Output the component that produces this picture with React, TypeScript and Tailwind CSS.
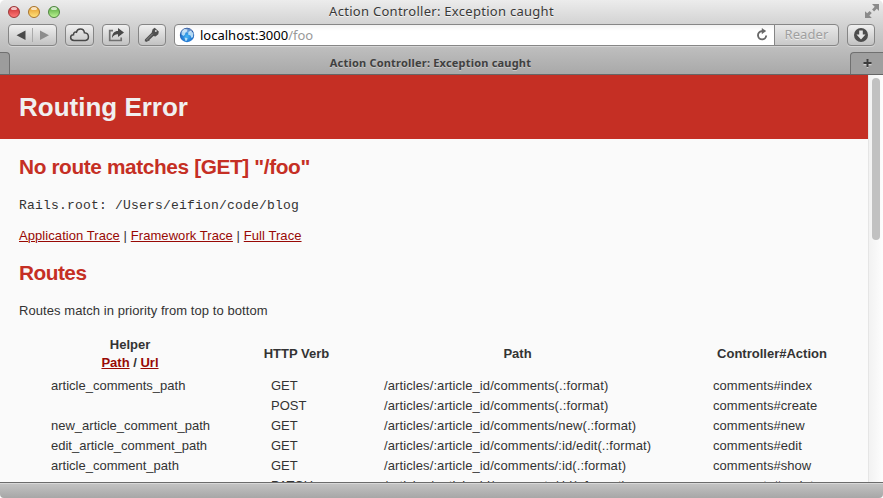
import React from "react";

const routes = [
  ["article_comments_path", "GET", "/articles/:article_id/comments(.:format)", "comments#index"],
  ["", "POST", "/articles/:article_id/comments(.:format)", "comments#create"],
  ["new_article_comment_path", "GET", "/articles/:article_id/comments/new(.:format)", "comments#new"],
  ["edit_article_comment_path", "GET", "/articles/:article_id/comments/:id/edit(.:format)", "comments#edit"],
  ["article_comment_path", "GET", "/articles/:article_id/comments/:id(.:format)", "comments#show"],
  ["", "PATCH", "/articles/:article_id/comments/:id(.:format)", "comments#update"],
];

const buttonLook =
  "flex h-[22px] items-center justify-center rounded-[4px] border border-[#858585] bg-linear-to-b from-[#f0f0f0] to-[#c2c2c2] shadow-[0_1px_0_#d5d5d5]";

function Light({ className }: { className: string }) {
  return (
    <span className={`relative h-3 w-3 overflow-hidden rounded-full border ${className}`}>
      <span className="absolute left-[2px] top-0 h-[3px] w-[6px] rounded-full bg-white/70" />
    </span>
  );
}

function TitleBar() {
  return (
    <div className="relative flex h-6 items-center pl-2">
      <div className="-mt-px flex gap-2">
        <Light className="border-[#9b3838] bg-linear-to-b from-[#c82a31] to-[#ff7777]" />
        <Light className="border-[#a8732c] bg-linear-to-b from-[#e49a25] to-[#ffe27a]" />
        <Light className="border-[#4f8540] bg-linear-to-b from-[#55a83c] to-[#b9f391]" />
      </div>
      <h1 className="absolute inset-x-0 top-[2px] text-center text-[13px] leading-[18px] tracking-[0.28px] text-[#383838] [text-shadow:0_1px_0_#f4f4f4]">
        Action Controller: Exception caught
      </h1>
      <svg className="absolute right-[4px] top-[4px]" width="14" height="14" viewBox="0 0 14 14" fill="#8a8a8a">
        <path d="M7 0h7v7l-2.2-2.2-2.7 2.6-2-2 2.6-2.7z" />
        <path d="M0 7.2l2.2 2.1 2.4-2.4 2.2 2.1-2.4 2.5L6.8 14H0z" />
      </svg>
    </div>
  );
}

function Toolbar() {
  return (
    <div className="flex h-[23px] items-start pl-2 pr-2">
      <div className={`${buttonLook} w-[49px]`}>
        <svg width="47" height="20" viewBox="0 0 47 20">
          <path d="M16.500 5.500v9.500L7.500 10.200z" fill="#484848" />
          <path d="M31 5.500v9.500l9-4.800z" fill="#8d8d8d" />
          <path d="M23.500 3v14" stroke="#aaa" />
        </svg>
      </div>
      <div className={`${buttonLook} ml-2 w-[29px]`}>
        <svg width="21" height="16" viewBox="0 0 21 16" fill="none" stroke="#484848" strokeWidth="1.500">
          <path d="M5 13.400C.6 13.300.6 8 4.500 7.700C4.500 5.500 6 4.700 7.500 5.200C8.200 1 14.800.8 15.400 5.700C20.700 6 20.500 13 16.400 13.400Z" />
        </svg>
      </div>
      <div className={`${buttonLook} ml-2 w-[28px]`}>
        <svg width="18" height="16" viewBox="0 0 18 16">
          <path d="M6 3.700H2.700v9.800h11.500V10.500" fill="none" stroke="#707070" strokeWidth="1.700" />
          <path d="M5 11C5 6.300 7.500 4 11 4V1l6 4.500-6 4.500V7.300C8.300 7.200 6.500 8.300 5 11z" fill="#484848" />
        </svg>
      </div>
      <div className={`${buttonLook} ml-2 w-[28px]`}>
        <svg width="16" height="16" viewBox="0 0 16 16">
          <path d="M8.600 2.300L10.700.8L14.800 4.600L14.300 7.300L11.500 9.400L9.500 8.900L5.500 12.700L5.300 14L3.600 13.800L3.200 15L.8 14.200L.9 12.500L7.600 5.700z" fill="#505050" />
          <circle cx="11.800" cy="3.900" r="1" fill="#d8d8d8" />
          <path d="M2.500 13L8.700 6.800" stroke="#999" strokeWidth=".8" />
        </svg>
      </div>
      <div className="ml-2 flex h-[22px] grow items-center rounded-l-[4px] border border-[#868686] bg-linear-to-b from-[#f3f3f3] to-white to-30% pl-1 shadow-[0_1px_0_#d5d5d5]">
        <svg width="16" height="16" viewBox="0 0 16 16">
          <defs>
            <radialGradient id="globe" cx=".5" cy=".6" r=".55">
              <stop offset="0" stopColor="#43b6f7" />
              <stop offset=".7" stopColor="#2377d0" />
              <stop offset="1" stopColor="#1b4a99" />
            </radialGradient>
          </defs>
          <circle cx="8" cy="8" r="7.200" fill="url(#globe)" />
          <path d="M2.500 4.500L5.500 2l3 .5-.5 2-1.500 1L6 7.500 4.500 9 2.500 7.500zM9.500 5l2.500-1.500 2.500 3-.5 3.500-1.500 1-1-2.500L9 7.500zM5.500 10.500l3 .5-.5 2.500-1.500.5z" fill="#cdeafa" opacity=".85" />
          <ellipse cx="8" cy="3.500" rx="4.800" ry="2.300" fill="#fff" opacity=".3" />
        </svg>
        <span className="ml-[5px] text-[13px] leading-[18px] text-black">
          localhost:3000<span className="text-[#999]">/foo</span>
        </span>
        <svg className="ml-auto mr-[5px]" width="14" height="14" viewBox="0 0 14 14">
          <path d="M8 3.200H6.700A4.100 4.100 0 1 0 11.200 7.500" fill="none" stroke="#686868" strokeWidth="1.900" />
          <path d="M6.800 0v6.200L11.200 3z" fill="#686868" />
        </svg>
      </div>
      <div className="-ml-px flex h-[22px] w-[65px] items-center justify-center rounded-r-[4px] border border-[#868686] bg-linear-to-b from-[#e9e9e9] to-[#c9c9c9] text-[13px] tracking-[0.1px] text-[#a0a0a0] shadow-[0_1px_0_#d5d5d5] [text-shadow:0_1px_0_#eee]">
        Reader
      </div>
      <div className={`${buttonLook} ml-2 w-[28px]`}>
        <svg width="16" height="16" viewBox="0 0 16 16">
          <circle cx="8" cy="8" r="7" fill="#4d4d4d" />
          <path d="M6.200 3.500h3.600v4h2.700L8 12.500 3.500 7.500h2.700z" fill="#e6e6e6" />
        </svg>
      </div>
    </div>
  );
}

function TabBar() {
  return (
    <div className="mt-[5px] flex h-[23px] border-b border-[#666]">
      <div className="w-[10px] rounded-tr-[4px] border-r border-t border-[#707070] bg-[#9c9c9c]" />
      <div className="grow rounded-b-[4px] pl-[1px] text-center text-[11px] font-bold leading-[21px] tracking-[0.2px] text-[#404040] [text-shadow:0_1px_0_#c8c8c8]">
        Action Controller: Exception caught
      </div>
      <div className="flex w-[33px] items-center justify-center rounded-tl-[4px] border-l border-t border-[#707070] bg-[#9f9f9f]">
        <svg width="9" height="9" viewBox="0 0 9 9">
          <path d="M4.500 1v8M.5 5.500h8" stroke="#d0d0d0" strokeWidth="1.500" />
          <path d="M4.500 0v8M.5 4h8" stroke="#3d3d3d" strokeWidth="2" />
        </svg>
      </div>
    </div>
  );
}

function TraceLink({ children }: { children: React.ReactNode }) {
  return <a className="text-[#980905] underline decoration-1 underline-offset-[1px]">{children}</a>;
}

function RouteTable() {
  return (
    <div className="mt-4 pl-[51px]">
      <div className="flex h-9 items-center text-center font-bold">
        <div className="w-[158px]">
          Helper
          <br />
          <TraceLink>Path</TraceLink> / <TraceLink>Url</TraceLink>
        </div>
        <div className="ml-[54px] w-[67px] whitespace-nowrap">HTTP Verb</div>
        <div className="ml-[54px] w-[267px]">Path</div>
        <div className="ml-[62px] w-[118px]">Controller#Action</div>
      </div>
      <div className="mt-1">
        {routes.map(([helper, verb, path, action], i) => (
          <div key={i} className="flex h-5 items-center whitespace-nowrap">
            <span className="w-[220px]">{helper}</span>
            <span className="w-[113px]">{verb}</span>
            <span className="w-[329px] tracking-[0.1px]">{path}</span>
            <span className="tracking-[0.06px]">{action}</span>
          </div>
        ))}
      </div>
    </div>
  );
}

export default function App() {
  return (
    <div className="flex h-[498px] w-[883px] flex-col overflow-hidden rounded-t-[5px] font-['Noto_Sans','Open_Sans',sans-serif]">
      <header className="h-[75px] shrink-0 bg-linear-to-b from-[#ececec] via-[#c9c9c9] via-45% to-[#a8a8a8]">
        <TitleBar />
        <Toolbar />
        <TabBar />
      </header>
      <div className="flex min-h-0 grow">
        <main className="w-[868px] overflow-hidden bg-[#fafafa] font-['Liberation_Sans',Arial,sans-serif] text-[13px] leading-[18px] text-[#333]">
          <div className="flex h-16 items-center bg-[#c52f24] pl-[19px]">
            <h1 className="text-[26px] font-bold leading-8 text-[#f0f0f0]">Routing Error</h1>
          </div>
          <div className="pl-[19px]">
            <h2 className="pt-4 text-[20.8px] font-bold leading-6 tracking-[-0.37px] text-[#c52f24]">
              No route matches [GET] "/foo"
            </h2>
            <p className="mt-[18px] font-['Liberation_Mono',monospace] text-[13px] leading-[18px] tracking-[0.2px]">
              Rails.root: /Users/eifion/code/blog
            </p>
            <p className="mt-3 tracking-[0.07px]">
              <TraceLink>Application Trace</TraceLink> | <TraceLink>Framework Trace</TraceLink> |{" "}
              <TraceLink>Full Trace</TraceLink>
            </p>
            <h2 className="mt-4 text-[20.8px] font-bold leading-6 tracking-[-0.5px] text-[#c52f24]">Routes</h2>
            <p className="mt-[17px] tracking-[0.07px]">Routes match in priority from top to bottom</p>
          </div>
          <RouteTable />
        </main>
        <aside className="w-[15px] border-l border-[#e5e5e5] bg-linear-to-r from-[#f2f2f2] to-[#fdfdfd] pl-[3px] pt-[3px]">
          <div className="h-[162px] w-2 rounded-full bg-[#c1c1c1]" />
        </aside>
      </div>
      <footer className="h-4 shrink-0 rounded-b-[4px] border-t border-[#6b6b6b] bg-linear-to-b from-[#c4c4c4] to-[#a7a7a7] shadow-[inset_0_1px_0_#d8d8d8]" />
    </div>
  );
}
